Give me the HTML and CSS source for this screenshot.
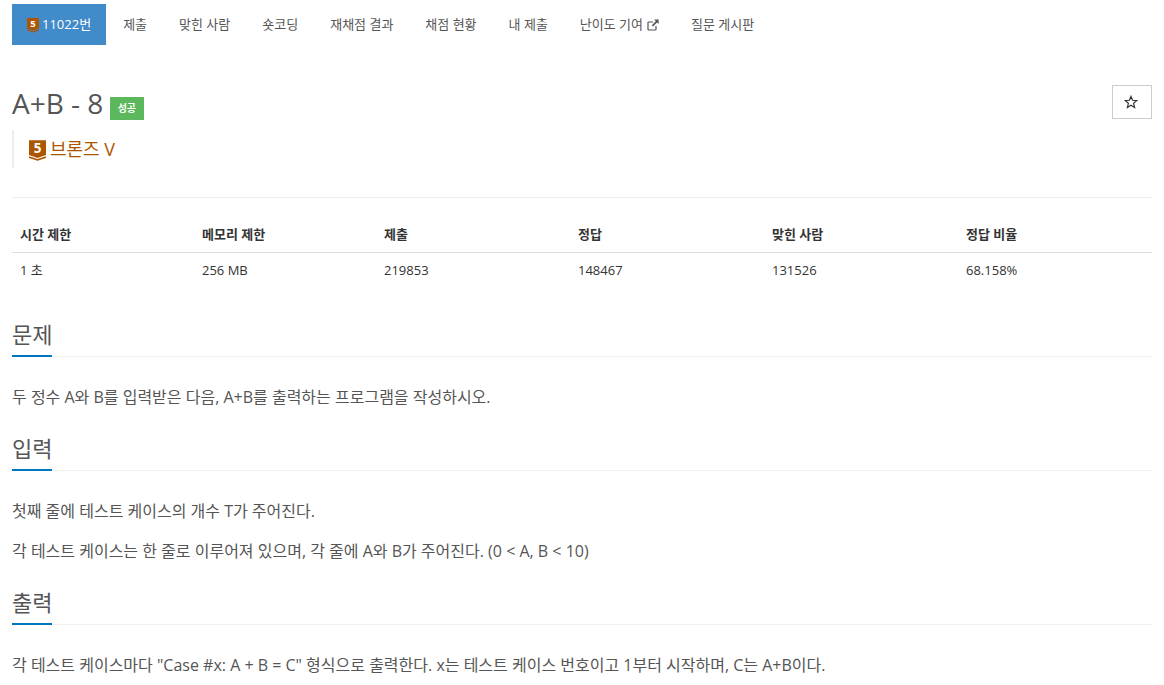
FILE: index.html
```html
<!DOCTYPE html>
<html lang="ko">
<head>
  <meta charset="UTF-8">
  <meta name="viewport" content="width=device-width, initial-scale=1.0">
  <title>A+B - 8</title>
  <link rel="stylesheet" href="styles.css">
</head>
<body>
  <div class="container">
    <ul class="tabs">
      <li class="active"><a href="#"><svg class="tier tier-small" viewBox="0 0 14 17"><path class="tier-shield" d="M0 0H14V12.2L7 14.6L0 12.2Z"/><path class="tier-chevron" d="M0 13.2L7 15.6L14 13.2V14.6L7 17L0 14.6Z"/><text x="7" y="10.5" class="tier-num">5</text></svg>11022번</a></li>
      <li><a href="#">제출</a></li>
      <li><a href="#">맞힌 사람</a></li>
      <li><a href="#">숏코딩</a></li>
      <li><a href="#">재채점 결과</a></li>
      <li><a href="#">채점 현황</a></li>
      <li><a href="#">내 제출</a></li>
      <li><a href="#">난이도 기여 <svg class="ext" viewBox="0 0 12 12"><path d="M9 7V10.2A.8.8 0 0 1 8.2 11H1.8A.8.8 0 0 1 1 10.2V3.8A.8.8 0 0 1 1.8 3H6" fill="none" stroke="currentColor" stroke-width="1.2"/><path d="M7.2 .6H11.6V5L10 3.4L6 7.4L4.8 6.2L8.8 2.2Z" fill="currentColor"/></svg></a></li>
      <li><a href="#">질문 게시판</a></li>
    </ul>

    <div class="page-header">
      <div class="title-row">
        <h1>A+B - 8 <span class="label">성공</span></h1>
        <button class="star-btn"><svg class="star" viewBox="0 0 14 14"><path d="M7 1.4L8.6 5.3L12.8 5.6L9.6 8.3L10.6 12.4L7 10.2L3.4 12.4L4.4 8.3L1.2 5.6L5.4 5.3Z" fill="none" stroke="currentColor" stroke-width="1.2"/></svg></button>
      </div>
      <blockquote class="tier-line">
        <svg class="tier tier-big" viewBox="0 0 14 17"><path class="tier-shield" d="M0 0H14V12.2L7 14.6L0 12.2Z"/><path class="tier-chevron" d="M0 13.2L7 15.6L14 13.2V14.6L7 17L0 14.6Z"/><text x="7" y="10.5" class="tier-num">5</text></svg>브론즈 V
      </blockquote>
    </div>

    <table class="info">
      <thead>
        <tr>
          <th class="c1">시간 제한</th>
          <th class="c2">메모리 제한</th>
          <th class="c3">제출</th>
          <th class="c4">정답</th>
          <th class="c5">맞힌 사람</th>
          <th>정답 비율</th>
        </tr>
      </thead>
      <tbody>
        <tr>
          <td>1 초</td>
          <td>256 MB</td>
          <td>219853</td>
          <td>148467</td>
          <td>131526</td>
          <td>68.158%</td>
        </tr>
      </tbody>
    </table>

    <section class="problem-section">
      <div class="headline"><h2>문제</h2></div>
      <p>두 정수 A와 B를 입력받은 다음, A+B를 출력하는 프로그램을 작성하시오.</p>
    </section>

    <section class="problem-section">
      <div class="headline"><h2>입력</h2></div>
      <p>첫째 줄에 테스트 케이스의 개수 T가 주어진다.</p>
      <p>각 테스트 케이스는 한 줄로 이루어져 있으며, 각 줄에 A와 B가 주어진다. (0 &lt; A, B &lt; 10)</p>
    </section>

    <section class="problem-section">
      <div class="headline"><h2>출력</h2></div>
      <p>각 테스트 케이스마다 "Case #x: A + B = C" 형식으로 출력한다. x는 테스트 케이스 번호이고 1부터 시작하며, C는 A+B이다.</p>
    </section>
  </div>
</body>
</html>
```

FILE: styles.css
```css
* {
  box-sizing: border-box;
}

html, body {
  height: 685px;
  overflow: hidden;
}

body {
  font-family: 'Open Sans', 'Noto Sans CJK KR', sans-serif;
  font-size: 13px;
  line-height: 1.43;
  margin: 0;
  background: #fff;
  color: #555;
}

.container {
  padding: 4px 12px 0;
}

a {
  color: inherit;
  text-decoration: none;
}

.tabs {
  display: flex;
  gap: 2px;
  list-style: none;
  margin: 0;
  padding: 0;
  height: 41px;
}

.tabs a {
  display: flex;
  align-items: center;
  height: 41px;
  padding: 0 15px;
  color: #555;
}

.tabs .active a {
  background: #428bca;
  color: #fff;
}

.tier {
  flex: none;
  overflow: visible;
}

.tier-shield {
  fill: #ad5600;
}

.tier-chevron {
  fill: #ad5600;
}

.tier-num {
  fill: #fff;
  font-size: 11px;
  line-height: 1;
  font-weight: 700;
  text-anchor: middle;
}

.tier-small {
  width: 12px;
  height: 14.5px;
  margin: 1px 3px 0 0;
}

.tier-big {
  width: 17px;
  height: 21px;
  margin-right: 4px;
}

.ext {
  width: 12px;
  height: 12px;
  margin-left: 4px;
}

.page-header {
  height: 153px;
  padding-top: 40px;
  border-bottom: 1px solid #eee;
}

.title-row {
  display: flex;
  justify-content: space-between;
  align-items: flex-start;
}

h1 {
  margin: 0;
  font-size: 28px;
  font-weight: 400;
  line-height: 36px;
  color: #555;
}

.label {
  display: inline-block;
  vertical-align: 2px;
  height: 23px;
  margin-left: -1px;
  padding: 0 8px;
  background: #5cb85c;
  color: #fff;
  font-size: 10px;
  font-weight: 600;
  line-height: 23px;
}

.star-btn {
  display: flex;
  align-items: center;
  justify-content: center;
  width: 40px;
  height: 34px;
  padding: 0 2px 0 0;
  background: #fff;
  border: 1px solid #ccc;
  color: #333;
}

.star {
  width: 14px;
  height: 14px;
}

.tier-line {
  display: flex;
  align-items: center;
  height: 38px;
  margin: 9px 0 0;
  padding: 2px 0 0 15px;
  border-left: 2px solid #eee;
  color: #ad5600;
  font-size: 18px;
}

.info {
  width: 100%;
  margin-top: 18px;
  border-collapse: collapse;
}

.info th, .info td {
  padding: 0 8px;
  text-align: left;
  color: #333;
}

.info th {
  height: 36px;
  padding-top: 2px;
  font-weight: 700;
  border-bottom: 1px solid #ddd;
}

.info td {
  height: 36px;
}

.c1, .c2 {
  width: 182px;
}

.c3, .c4, .c5 {
  width: 194px;
}

.headline {
  height: 37px;
  margin-bottom: 27px;
  border-bottom: 1px dotted #e5e5e5;
}

.headline h2 {
  display: inline-block;
  height: 37px;
  margin: 0;
  border-bottom: 2px solid #0076c0;
  font-size: 22px;
  font-weight: 400;
  line-height: 28px;
  color: #555;
}

.problem-section {
  margin-bottom: 24px;
}

.problem-section p {
  margin: 0 0 14px;
  font-size: 16px;
  line-height: 26px;
  color: #555;
}

.problem-section p:last-child {
  margin-bottom: 0;
}

.info + .problem-section {
  margin-top: 32px;
}
```
